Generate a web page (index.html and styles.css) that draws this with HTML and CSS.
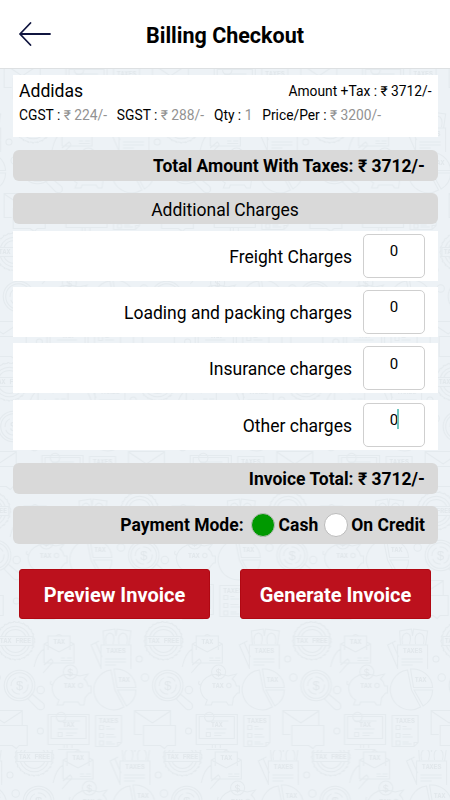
FILE: index.html
```
<!DOCTYPE html>
<html lang="en">
<head>
  <meta charset="UTF-8">
  <meta name="viewport" content="width=device-width, initial-scale=1.0">
  <title>Billing Checkout</title>
  <link rel="stylesheet" href="styles.css">
</head>
<body>
  <svg class="backdrop" width="450" height="800" aria-hidden="true">
    <defs>
      <g id="icons">
        <!-- stamp -->
        <circle cx="15.3" cy="20.8" r="18.6" stroke-dasharray="4 .8"/>
        <circle cx="15.3" cy="20.8" r="19.3" stroke-dasharray="2 2.9"/>
        <path d="M1.500 16a14.600 14.600 0 0 1 27.600 0M1.500 26a14.600 14.600 0 0 0 27.600 0M5 16a11.500 11.500 0 0 1 20.600 0M5 26a11.500 11.500 0 0 0 20.600 0M-2 16.500h34.600v9H-2z"/>
        <text x="15.300" y="23.300">TAX FREE</text>
        <!-- letter in hand -->
        <path d="M48 30V16h22v14M44 43V24l4-2M70 22l4 2v19H44M44 24l15 8 15-8M56 16q3-3 6 0M61 38h4M67 38h5M61 40.500h11M34 47q3-14 10-18M43 53l7-8q5-3 1-6l-7 6"/>
        <text x="59" y="24">TAX</text>
        <!-- taxes folder -->
        <path d="M101 49V25h30v24M104 25l-1-14 12-2 1 7 1-7 14 2-2 14M106 24q-2-10 4-11 6 1 3 11M119 24q-2-10 4-11 6 1 4 11M99 21l-8 4 10 23M96 23l6 14M105 39h21M105 42h21M105 45h11"/>
        <text x="116" y="33">TAXES</text>
        <circle cx="139.300" cy="39" r="3"/>
        <!-- magnifier -->
        <circle cx="19.500" cy="65.500" r="15.300"/>
        <circle cx="19.500" cy="65.500" r="12.800"/>
        <circle cx="19.500" cy="65.500" r="8.500" stroke-dasharray="10 3"/>
        <text class="sign" x="19.500" y="70">$</text>
        <path d="M28 79l10 10q4 2 6-1 1-3-1-5l-11-9z"/>
        <circle cx="40.600" cy="70" r="3.700"/>
        <!-- piggy bank -->
        <path d="M63 55q-10 4-11 13 1 9 7 12l-2 5h6l1-3h14l2 3h4l1-7 4-5h2v-7h-3q-1-5-4-7l4-5-8 2q-8-3-18-1M53 65q-4 0-2-4"/>
        <circle cx="70.300" cy="52" r="7"/>
        <circle cx="80.500" cy="65.500" r="2.200"/>
        <text class="sign coin" x="70.300" y="55.500">$</text>
        <text x="69.500" y="68">TAX</text>
        <!-- pie chart -->
        <path d="M111 50a20 20 0 1 0 13 37L115 70zM114 49a20 20 0 0 1 22 18.500h-19zM117.500 70h18.500a19 19 0 0 1-9.500 16z"/>
        <text x="124" y="62">TAX</text>
        <circle cx="145" cy="57.500" r="3.700"/>
        <!-- monitor -->
        <path d="M48 94.500h41v30H48zM51 96.500h35v22H51zM64 125v3M67 125v3M72 125v3M58 129.500h21M58 101h22M58 109h20M58 112.500h4v4h-4zM66 113h11M66 115.500h7"/>
        <circle cx="61" cy="97" r="4.700"/>
        <text x="68.500" y="107">TAX</text>
        <!-- tax list -->
        <path d="M95.500 95.500h26v27l-4 4h-22zM121.500 122.500h-4v4M99.500 105.500h4v4h-4zM99.500 113.500h4v4h-4zM99.500 121h4v4h-4zM106 106.500h4M106 109h9M106 114.500h8M106 117h10M106 122h6M106 124h9"/>
        <text x="108.500" y="103.300">TAXES</text>
        <!-- mail -->
        <path d="M142 114.500h-7.500v-24h36v14.500M134.500 91l18 12 18-12M143.500 105.500h32v20h-8l-3 3-4-3h-17z"/>
        <circle cx="40.300" cy="111" r="3"/>
      </g>
      <pattern id="tile" width="148.300" height="130" patternUnits="userSpaceOnUse">
        <rect class="paper" width="149" height="130"/>
        <use href="#icons"/>
        <use href="#icons" x="-148.300"/>
        <use href="#icons" x="148.300"/>
      </pattern>
      <rect id="band" x="-148" width="760" height="130" fill="url(#tile)" stroke="none"/>
    </defs>
    <use href="#band" x="19" y="736"/>
    <use href="#band" x="18" y="-27"/>
    <use href="#band" x="18" y="103"/>
    <use href="#band" x="-1" y="231"/>
    <use href="#band" x="-6" y="361"/>
    <use href="#band" x="-24" y="490"/>
    <use href="#band" x="0" y="620"/>
  </svg>

  <header>
    <a class="back" href="#" aria-label="Back">
      <svg width="34" height="26" viewBox="0 0 34 26">
        <path d="M32 13H2M12.500 2L2 13l10.500 11"/>
      </svg>
    </a>
    <h1>Billing Checkout</h1>
  </header>

  <main>
    <section class="item">
      <div class="item-top">
        <span class="name">Addidas</span>
        <span class="amount">Amount +Tax : ₹ 3712/-</span>
      </div>
      <div class="details">
        <span>CGST : <em>₹ 224/-</em></span>
        <span>SGST : <em>₹ 288/-</em></span>
        <span>Qty : <em>1</em></span>
        <span>Price/Per : <em>₹ 3200/-</em></span>
      </div>
    </section>

    <div class="bar total">Total Amount With Taxes: ₹ 3712/-</div>
    <div class="bar heading">Additional Charges</div>

    <div class="charges">
      <div class="charge"><span>Freight Charges</span><div class="field">0</div></div>
      <div class="charge"><span>Loading and packing charges</span><div class="field">0</div></div>
      <div class="charge"><span>Insurance charges</span><div class="field">0</div></div>
      <div class="charge"><span>Other charges</span><div class="field focused">0</div></div>
    </div>

    <div class="bar total">Invoice Total: ₹ 3712/-</div>

    <div class="bar payment">
      <span>Payment Mode:</span>
      <span class="radio checked"></span><span class="option">Cash</span>
      <span class="radio"></span><span>On Credit</span>
    </div>

    <div class="actions">
      <button class="btn">Preview Invoice</button>
      <button class="btn">Generate Invoice</button>
    </div>
  </main>
</body>
</html>
```
FILE: styles.css
```
* { box-sizing: border-box; }
body { font-family: Roboto, sans-serif; margin: 0; height: 800px; overflow: hidden; background: #edf2f6; color: #000; }

.backdrop { position: absolute; top: 0; left: 0; z-index: -1; fill: none; stroke: #e4eaee; stroke-width: 1; }
.backdrop .paper { fill: #edf2f6; stroke: none; }
.backdrop text { fill: #e1e7eb; stroke: none; font: bold 6.5px "Liberation Mono", monospace; text-anchor: middle; }
.backdrop .sign { font-size: 13px; font-weight: normal; }
.backdrop .coin { font-size: 10px; }

header { display: grid; grid-template-columns: 60px 1fr 60px; align-items: center; height: 69px; background: #fff; border-bottom: 1px solid #dde0e2; }
header h1 { margin: 0; padding-top: 3px; font-size: 21.5px; font-weight: 700; text-align: center; white-space: nowrap; }
.back { display: block; padding-left: 18px; height: 26px; }
.back svg { display: block; fill: none; stroke: #10153f; stroke-width: 1.8; stroke-linecap: round; stroke-linejoin: round; }

main { padding: 6px 12.5px 0; }
.item { height: 62px; padding: 5px 6px 0 6.5px; background: #fff; }
.item-top { display: flex; justify-content: space-between; align-items: center; height: 22px; }
.name { font-size: 17.6px; }
.amount { font-size: 13.8px; }
.details { display: flex; gap: 9.8px; padding-top: 4.5px; font-size: 13.8px; line-height: 16px; white-space: nowrap; }
.details em { font-style: normal; color: #929292; }

.bar { display: flex; align-items: center; justify-content: flex-end; height: 31px; margin-top: 12.5px; padding: 2px 12.5px 0; background: #d9d9d9; border-radius: 6px; font-size: 17.5px; font-weight: 700; white-space: nowrap; }
.heading { justify-content: center; padding-top: 3px; font-weight: 400; }

.charges { display: grid; gap: 6.3px; margin: 6.7px 0 13px; }
.charge { display: flex; align-items: center; justify-content: flex-end; gap: 11px; height: 50px; padding-right: 12.5px; background: #fff; font-size: 17.5px; }
.charge span { padding-top: 2px; }
.field { width: 62px; height: 44px; padding-top: 7.5px; border: 1px solid #cfcfcf; border-radius: 5px; font-size: 15px; line-height: 18px; text-align: center; }
.focused { position: relative; }
.focused::after { content: ""; position: absolute; left: 33px; top: 5px; width: 1.5px; height: 20px; background: #6cc5bd; }

.charges + .total { margin-top: 0; }
.payment { height: 38px; padding-top: 0; }
.radio { width: 24px; height: 24px; margin: 0 3px 0 6px; background: #fff; border: 1px solid #bbb; border-radius: 50%; }
.checked { margin-right: 4px; margin-left: 7px; background: #090; }

.actions { display: flex; justify-content: space-between; padding: 25px 6.5px 0; }
.btn { width: 191px; height: 50px; padding: 1px 0 0; background: #bc111d; color: #fff; border: 1px solid #b00812; border-radius: 3px; font-family: inherit; font-size: 20px; font-weight: 700; }
```
